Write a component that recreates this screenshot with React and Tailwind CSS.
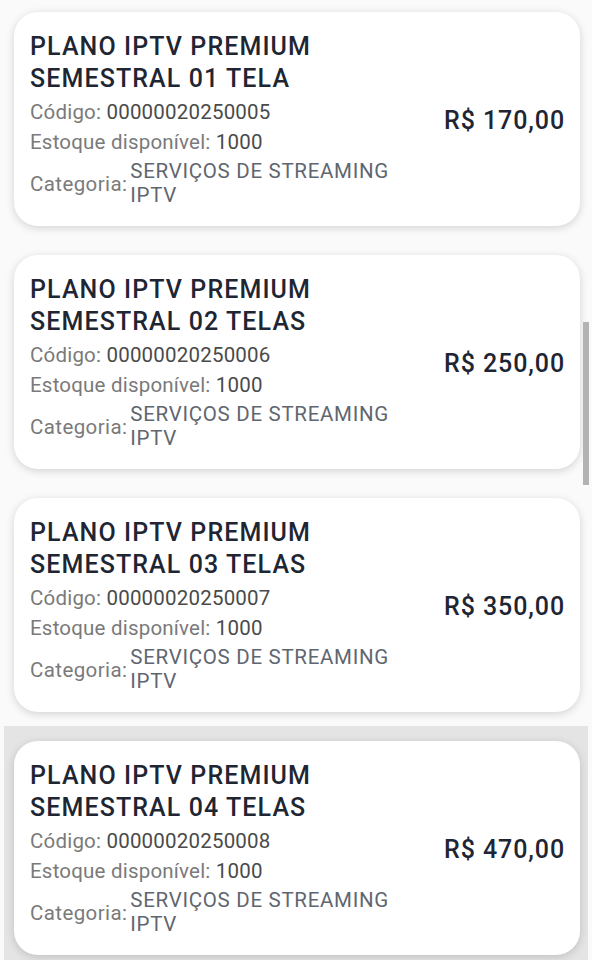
const plans = [
  { name: 'SEMESTRAL 01 TELA', code: '00000020250005', price: '170,00' },
  { name: 'SEMESTRAL 02 TELAS', code: '00000020250006', price: '250,00' },
  { name: 'SEMESTRAL 03 TELAS', code: '00000020250007', price: '350,00' },
  { name: 'SEMESTRAL 04 TELAS', code: '00000020250008', price: '470,00', active: true },
]

function PlanCard({ plan }) {
  return (
    <div className={plan.active ? 'mx-[4px] bg-[#e4e4e4] pb-[14px] pl-[10px] pr-[8px] pt-[15px]' : 'pb-[14px] pl-[14px] pr-[12px] pt-[15px]'}>
      <div className="flex h-[214px] items-center rounded-[24px] bg-white pl-[16px] pr-[15px] shadow-[0_2px_8px_rgba(0,0,0,0.16)]">
        <div className="flex-1">
          <h2 className="-mt-[1px] text-[25px] font-medium leading-[32px] tracking-[1.1px] text-[#1f2633]">
            PLANO IPTV PREMIUM
            <br />
            {plan.name}
          </h2>
          <p className="mt-[2px] text-[20.5px] leading-[30px] tracking-[0.2px] text-[#7a7a7a]">
            Código: <span className="text-[#4a4a4a]">{plan.code}</span>
          </p>
          <p className="text-[20.5px] leading-[30px] tracking-[0.2px] text-[#7a7a7a]">
            Estoque disponível: <span className="text-[#4a4a4a]">1000</span>
          </p>
          <div className="mt-[2px] flex items-center text-[#7a7a7a]">
            <span className="mt-[4px] text-[20.5px] tracking-[0.4px]">Categoria:</span>
            <span className="ml-[3px] text-[20.5px] leading-[24px] tracking-[0.7px] text-[#5f6670]">
              SERVIÇOS DE STREAMING
              <br />
              IPTV
            </span>
          </div>
        </div>
        <div className="self-center pt-[4px] text-[25px] font-medium tracking-[0.9px] text-[#1f2633]">R$ {plan.price}</div>
      </div>
    </div>
  )
}

export default function App() {
  return (
    <div className="relative h-[960px] w-[592px] overflow-hidden bg-[#fafafa] font-['Roboto',sans-serif]">
      <div className="-mt-[3px]">
        {plans.map((plan) => (
          <PlanCard key={plan.code} plan={plan} />
        ))}
      </div>
      <div className="absolute left-[583px] top-[322px] h-[163px] w-[6px] bg-[#b3b3b3]" />
    </div>
  )
}
